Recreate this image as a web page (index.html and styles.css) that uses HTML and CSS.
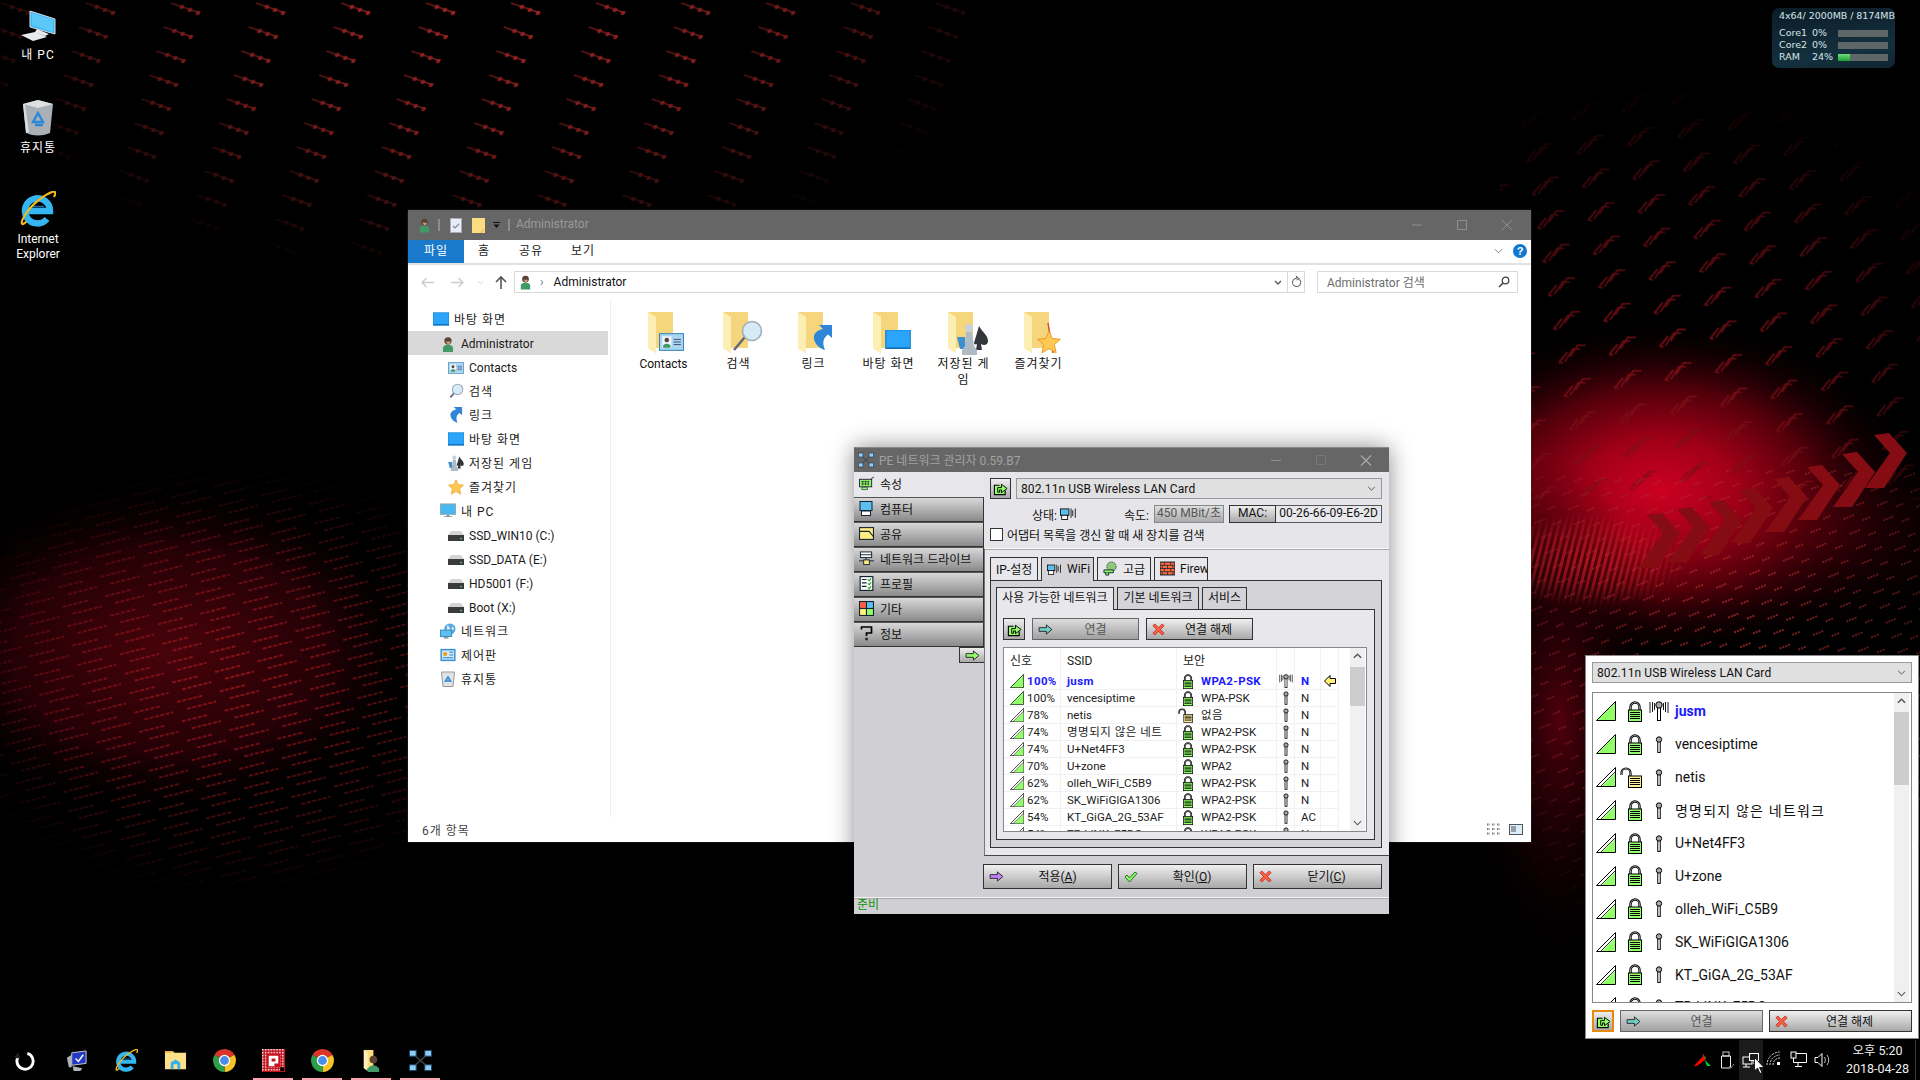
FILE: index.html
```html
<!DOCTYPE html>
<html lang="ko">
<head>
<meta charset="utf-8">
<title>Desktop</title>
<link rel="stylesheet" href="styles.css">
</head>
<body>
<svg class="defs" width="0" height="0">
  <defs>
    <symbol id="sig" viewBox="0 0 20 20"><path d="M.5 19.5 19.5.5v19z" fill="#90ff68" stroke="#000"/></symbol>
    <symbol id="sig2" viewBox="0 0 20 20"><path d="M.5 19.5 19.5.5v19z" fill="#fff" stroke="#000"/><path d="M6 19 19 6v13z" fill="#90ff68"/><path d="M4.5 19.5 19.5 4.5" stroke="#000" stroke-width=".8"/></symbol>
    <symbol id="lock" viewBox="0 0 14 21"><path d="M2.5 9.5V6a4.5 4.5 0 0 1 9 0v3.5" fill="none" stroke="#000" stroke-width="2.4"/><path d="M2.5 9.5V6a4.5 4.5 0 0 1 9 0v3.5" fill="none" stroke="#aaa" stroke-width=".8"/><rect x=".5" y="9" width="13" height="11.5" fill="#90ff68" stroke="#000"/><path d="M2 11.5h10M2 13.5h10M2 15.5h10M2 17.5h10" stroke="#000"/></symbol>
    <symbol id="lockopen" viewBox="0 0 22 21"><path d="M1.5 8V6a4.5 4.5 0 0 1 9 0v4" fill="none" stroke="#000" stroke-width="2.2"/><path d="M1.5 8V6a4.5 4.5 0 0 1 9 0v4" fill="none" stroke="#aaa" stroke-width=".7"/><rect x="8.5" y="9" width="13" height="11.5" fill="#fff098" stroke="#000"/><path d="M10 11.5h10M10 13.5h10M10 15.5h10M10 17.5h10" stroke="#000"/></symbol>
    <symbol id="ant" viewBox="0 0 12 20"><rect x="4.500" y="6" width="3" height="13.5" fill="#fff" stroke="#000" stroke-width="1.200"/><circle cx="6" cy="4" r="3.200" fill="#aaa" stroke="#000" stroke-width="1.200"/></symbol>
    <symbol id="antw" viewBox="0 0 20 20"><rect x="8.500" y="6" width="3" height="13.5" fill="#fff" stroke="#000"/><circle cx="10" cy="4" r="3.2" fill="#aaa" stroke="#000"/><path d="M3.5 1v10M5.5 2v7M16.5 1v10M14.5 2v7M1 1v11M19 1v11" stroke="#000" stroke-width=".9"/></symbol>
    <symbol id="refresh" viewBox="0 0 16 16"><path d="M1.5 5h11v9.500h-11z" fill="#90ff68"/><path d="M7 4.500H1.500v10H13V10" fill="none" stroke="#000" stroke-width="1.200"/><path d="M5 12V7h4V3.500l6 4.500-6 4.500V9.500H7V12z" fill="#90ff68" stroke="#000"/></symbol>
    <symbol id="arrow" viewBox="0 0 16 12"><path d="M1 4h8V1l6 5-6 5V8H1z" fill="currentColor" stroke="#222"/></symbol>
    <symbol id="xmark" viewBox="0 0 14 14"><path d="M1 3 3 1l4 4 4-4 2 2-4 4 4 4-2 2-4-4-4 4-2-2 4-4z" fill="#ff6040" stroke="#b02010" stroke-width=".8"/></symbol>
    <symbol id="check" viewBox="0 0 14 12"><path d="M1 6l2-2 2.5 3L11 1l2 1.5L5.500 11z" fill="#90ff68" stroke="#207020"/></symbol>
    <symbol id="chev" viewBox="0 0 10 6"><path d="M1 5l4-4 4 4" fill="none" stroke="#555" stroke-width="1.6"/></symbol>
    <symbol id="chevd" viewBox="0 0 10 6"><path d="M1 1l4 4 4-4" fill="none" stroke="#555" stroke-width="1.2"/></symbol>
    <symbol id="person" viewBox="0 0 16 16"><path d="M3 16v-4q0-3 5-3.500q5 .5 5 3.500v4z" fill="#3f9a68"/><circle cx="8" cy="4.800" r="3.600" fill="#5b4232"/><path d="M6 5.500h4.500q0 2.500-2 2.800-2-.3-2.500-2.800z" fill="#c99f80"/></symbol>
    <symbol id="fld" viewBox="0 0 26 41"><path d="M0 0h25v36H8v5L0 36z" fill="#f6d67c"/><path d="M0 0l8 5v36l-8-5z" fill="#fdeeb4"/></symbol>
    <symbol id="desk" viewBox="0 0 18 14"><rect width="18" height="14" fill="#1e9bf5"/><rect width="18" height="12.500" fill="#2aa5fb"/><path d="M0 13h18v1H0z" fill="#0a5f9e"/><path d="M0 0h18v14H0z" fill="none" stroke="#1580cc" stroke-width=".8"/></symbol>
    <symbol id="card" viewBox="0 0 24 17"><rect x=".5" y=".5" width="23" height="16" fill="#a9d6f3" stroke="#3b84b8"/><rect x="3" y="3" width="9" height="11" fill="#eaf5fc"/><circle cx="7.500" cy="6.500" r="2.200" fill="#5b4232"/><path d="M4 14v-2.500q3.500-2.500 7 0V14z" fill="#3f9a68"/><path d="M14 6h7M14 8.500h7M14 11h7" stroke="#446" stroke-width=".9"/></symbol>
    <symbol id="mag" viewBox="0 0 20 20"><path d="M3 18l6-7" stroke="#667" stroke-width="2.200"/><circle cx="12" cy="8" r="6.500" fill="#d6eaf8" stroke="#9ab" stroke-width="1.300"/></symbol>
    <symbol id="link" viewBox="0 0 19 25"><path d="M19 0v13l-4-3.500C10 13 9 18 12 25 6 23 2 19 1 14 0 10 3 5 10 4L6 0z" fill="#2f86d8"/></symbol>
    <symbol id="game" viewBox="0 0 31 32"><path d="M0 14h8v6l5 6H3z" fill="#3e8fd0"/><path d="M22 3c3 6 9 9 9 15 0 4-4 5-7 3l1 6h-6l1-6c-2 1-3 0-3-1z" fill="#33363a"/><circle cx="12" cy="5" r="4" fill="#c8d2da"/><path d="M9 9h6l2 14 3 4v5H5v-5l3-4z" fill="#aebac4"/></symbol>
    <symbol id="star" viewBox="0 0 20 20"><path d="M10 1l2.700 6 6.800.7-5 4.500 1.400 6.800-5.900-3.400L4.100 19l1.400-6.800-5-4.500 6.800-.7z" fill="#ffc850" stroke="#e69a28" stroke-width=".8"/></symbol>
    <symbol id="pc" viewBox="0 0 17 16"><rect x=".5" y=".5" width="16" height="11" fill="#4ab8f2" stroke="#8aa"/><path d="M7 12h3v1.500h3v1H4v-1h3z" fill="#8a9aa8"/></symbol>
    <symbol id="drive" viewBox="0 0 16 10"><path d="M3 0h10l3 4H0z" fill="#d4d4d4"/><rect y="4" width="16" height="6" fill="#3a3a3a"/><rect x="12" y="7" width="2" height="1.200" fill="#3fd060"/></symbol>
    <symbol id="netw" viewBox="0 0 17 16"><circle cx="10.500" cy="6" r="6" fill="#5aa8e8"/><path d="M8 1l3 5-4 2zM13 3l2 3-3 2z" fill="#e8eef4"/><rect x=".5" y="7" width="12" height="7" fill="#5cc0ee" stroke="#2a78a8" stroke-width=".8"/><rect x="4" y="14.500" width="5" height="1.500" fill="#889"/></symbol>
    <symbol id="cpl" viewBox="0 0 17 14"><rect x=".5" y=".5" width="16" height="13" fill="#2f8fd0"/><rect x="2" y="2" width="13" height="10" fill="#cfe9f9"/><circle cx="5.500" cy="6" r="2.300" fill="#e8a020"/><path d="M10 4h4M10 7h4M3 10h11" stroke="#2a78b8"/></symbol>
    <symbol id="bin" viewBox="0 0 14 16"><path d="M.5 1h13L12 15.500H2z" fill="#dfe3e6" stroke="#999"/><path d="M7 6l2.500 4h-5z" fill="none" stroke="#2a88d8" stroke-width="1.600"/></symbol>
    <symbol id="chrome" viewBox="0 0 22 22"><path d="M11 11 1.500 5.500a11 11 0 0 1 19 0z" fill="#d9352b"/><path d="M11 11l9.500-5.500A11 11 0 0 1 11 22z" fill="#f7c325"/><path d="M11 11v11A11 11 0 0 1 1.500 5.500z" fill="#2f9e48"/><circle cx="11" cy="11" r="5.400" fill="#fff"/><circle cx="11" cy="11" r="4.200" fill="#4a8de8"/></symbol>
    <symbol id="ie" viewBox="0 0 36 36"><path d="M6 20h24A12.500 12.500 0 1 0 27 28" fill="none" stroke="#35b6f0" stroke-width="6.500"/><path d="M12 15.500h12" stroke="#0d6fb0" stroke-width="1.500"/><path d="M6.500 30.500C1 36 0 32 5 24 11 14 24 4 32 1c4-1 4 1 2 5" fill="none" stroke="#f2b81c" stroke-width="2.200"/></symbol>
    <symbol id="penet" viewBox="0 0 24 22"><path d="M4 4l16 14M20 4 4 18" stroke="#444" stroke-width="1.400"/><g fill="#8ecdf5" stroke="#246"><rect x=".5" y=".5" width="7" height="6"/><rect x="16.500" y=".5" width="7" height="6"/><rect x=".5" y="15.500" width="7" height="6"/><rect x="16.500" y="15.500" width="7" height="6"/></g></symbol>
    <symbol id="wifi" viewBox="0 0 20 15"><rect x=".5" y="1.500" width="10" height="7.500" fill="#5cc0ee" stroke="#000"/><rect x="2" y="9" width="7" height="5" fill="#fff" stroke="#000"/><path d="M13 1v11M15 3v7M18 1v11" stroke="#000"/></symbol>
    <symbol id="nic" viewBox="0 0 16 14"><rect x=".5" y="2.500" width="13" height="8" fill="#90ff68" stroke="#223"/><path d="M13 2l3-2" stroke="#223"/><path d="M2 5h9M2 7.500h9M4 4v5M7 4v5M10 4v5" stroke="#223" stroke-width=".7"/><path d="M3 11h6v2.500H3z" fill="#90ff68" stroke="#223" stroke-width=".7"/></symbol>
    <symbol id="comp" viewBox="0 0 14 15"><rect x=".5" y=".5" width="12" height="9" fill="#5cc0ee" stroke="#123"/><rect x="2" y="10" width="9" height="4.500" fill="#fff" stroke="#123"/></symbol>
    <symbol id="share" viewBox="0 0 14 12"><rect x=".5" y=".5" width="13" height="11" fill="#ffee80" stroke="#123"/><path d="M.5 4h9l4 5" fill="none" stroke="#123"/></symbol>
    <symbol id="drv" viewBox="0 0 16 15"><path d="M7.500 5v5M0 10h16" stroke="#123"/><rect x="5" y="9" width="6" height="5" fill="#ffee80" stroke="#123"/><rect x="1.500" y=".5" width="12" height="6" fill="#fff" stroke="#123"/><path d="M1 3.500h13" stroke="#123"/></symbol>
    <symbol id="prof" viewBox="0 0 12 13"><rect x=".5" y=".5" width="11" height="12" fill="#fff" stroke="#123"/><path d="M2 3h4M2 6h4M2 9h4" stroke="#123"/><path d="M7 3l1.500 1L10 2M7 6.500l1.500 1L10 5.500M7 10l1.500 1L10 9" fill="none" stroke="#2a2"/></symbol>
    <symbol id="misc" viewBox="0 0 14 14"><rect x=".5" y=".5" width="6.500" height="6.500" fill="#ff6040" stroke="#123"/><rect x="7" y=".5" width="6.500" height="6.500" fill="#5cc0ee" stroke="#123"/><rect x=".5" y="7" width="6.500" height="6.500" fill="#ffee80" stroke="#123"/><rect x="7" y="7" width="6.500" height="6.500" fill="#90ff68" stroke="#123"/></symbol>
    <symbol id="help" viewBox="0 0 12 15"><path d="M1 3.500V1h10v6H6v3" fill="none" stroke="#000" stroke-width="1.700"/><rect x="4.800" y="11.800" width="2.500" height="2.500" fill="#223"/></symbol>
    <symbol id="wall" viewBox="0 0 14 12"><rect width="14" height="12" fill="#ff6a3c" stroke="#123"/><path d="M0 3h14M0 6h14M0 9h14M4 0v3M10 0v3M2 3v3M7 3v3M12 3v3M4 6v3M10 6v3M2 9v3M7 9v3M12 9v3" stroke="#123" stroke-width=".7"/></symbol>
    <symbol id="adv" viewBox="0 0 16 15"><circle cx="9" cy="5.500" r="5" fill="#90c878" stroke="#123" stroke-dasharray="1 1"/><path d="M1 9h10v3H1z" fill="#90ff68" stroke="#123"/><path d="M3 12v2.500h3V12" fill="#90ff68" stroke="#123"/></symbol>
    <pattern id="pdot" width="3" height="3" patternUnits="userSpaceOnUse"><rect width="3" height="3" fill="#c3121c"/><rect width="1.500" height="1.500" fill="#fff"/></pattern>
  </defs>
</svg>

<main class="desktop">
  <svg class="wallpaper" viewBox="0 0 1920 1080" preserveAspectRatio="none" aria-hidden="true">
    <defs>
      <pattern id="ps" width="85" height="24" patternUnits="userSpaceOnUse" patternTransform="skewX(-17)">
        <g fill="#a82626"><path d="M2 3l32 10" stroke="#a82626" stroke-width="1.200"/><circle cx="14" cy="7" r="2.200"/><circle cx="23" cy="10" r="2.200"/><circle cx="32" cy="13" r="2.200"/></g>
      </pattern>
      <pattern id="pa" width="51" height="34" patternUnits="userSpaceOnUse" patternTransform="rotate(-9)">
        <g fill="none" stroke="#7a0e16" stroke-width="1.700"><path d="M4 24l10-9M4 24l4 1"/><path d="M10 24l10-11 7 1"/><path d="M16 20l9-10 8 1"/></g>
      </pattern>
      <pattern id="pl" width="44" height="20" patternUnits="userSpaceOnUse" patternTransform="rotate(-14)">
        <path d="M2 4h26M10 13h30" stroke="#a81a20" stroke-width="1.500" stroke-dasharray="4 1.500"/>
      </pattern>
      <pattern id="pr" width="36" height="16" patternUnits="userSpaceOnUse" patternTransform="rotate(-22)">
        <path d="M3 4h12M20 12h9" stroke="#b83030" stroke-width="1.300" stroke-dasharray="2 1"/>
      </pattern>
      <pattern id="pb" width="6" height="30" patternUnits="userSpaceOnUse" patternTransform="rotate(14)">
        <path d="M1.500 0v30" stroke="#d8202a" stroke-width="3"/>
      </pattern>
      <radialGradient id="mtop" gradientUnits="userSpaceOnUse" cx="0" cy="0" r="1" gradientTransform="translate(470 -30) scale(560 310)"><stop offset="0" stop-color="#fff"/><stop offset=".55" stop-color="#bbb"/><stop offset="1" stop-color="#000"/></radialGradient>
      <mask id="mt"><rect width="1920" height="1080" fill="url(#mtop)"/></mask>
      <radialGradient id="marr" gradientUnits="userSpaceOnUse" cx="0" cy="0" r="1" gradientTransform="translate(1660 380) scale(340 300)"><stop offset="0" stop-color="#fff"/><stop offset=".6" stop-color="#999"/><stop offset="1" stop-color="#000"/></radialGradient>
      <mask id="ma"><rect width="1920" height="1080" fill="url(#marr)"/></mask>
      <radialGradient id="mleft" gradientUnits="userSpaceOnUse" cx="0" cy="0" r="1" gradientTransform="translate(230 680) scale(300 220)"><stop offset="0" stop-color="#fff"/><stop offset=".6" stop-color="#888"/><stop offset="1" stop-color="#000"/></radialGradient>
      <mask id="ml"><rect width="1920" height="1080" fill="url(#mleft)"/></mask>
      <radialGradient id="mright" gradientUnits="userSpaceOnUse" cx="0" cy="0" r="1" gradientTransform="translate(1740 640) scale(300 340)"><stop offset="0" stop-color="#fff"/><stop offset=".7" stop-color="#777"/><stop offset="1" stop-color="#000"/></radialGradient>
      <mask id="mr"><rect width="1920" height="1080" fill="url(#mright)"/></mask>
      <radialGradient id="mband" gradientUnits="userSpaceOnUse" cx="0" cy="0" r="1" gradientTransform="translate(1590 560) scale(100 48)"><stop offset="0" stop-color="#aaa"/><stop offset=".6" stop-color="#666"/><stop offset="1" stop-color="#000"/></radialGradient>
      <mask id="mb"><rect width="1920" height="1080" fill="url(#mband)"/></mask>
      <radialGradient id="glow" gradientUnits="userSpaceOnUse" cx="0" cy="0" r="1" gradientTransform="translate(1660 490) scale(250 165)"><stop offset="0" stop-color="#cc0022"/><stop offset=".3" stop-color="#a20018"/><stop offset=".62" stop-color="#50000a"/><stop offset="1" stop-color="#100002" stop-opacity="0"/></radialGradient>
      <radialGradient id="glow2" gradientUnits="userSpaceOnUse" cx="0" cy="0" r="1" gradientTransform="translate(170 650) scale(260 170)"><stop offset="0" stop-color="#48030a"/><stop offset=".6" stop-color="#240106"/><stop offset="1" stop-color="#000" stop-opacity="0"/></radialGradient>
      <radialGradient id="glow3" gradientUnits="userSpaceOnUse" cx="0" cy="0" r="1" gradientTransform="translate(1560 720) scale(100 260)"><stop offset="0" stop-color="#50000c"/><stop offset="1" stop-color="#000" stop-opacity="0"/></radialGradient>
      <radialGradient id="glow4" gradientUnits="userSpaceOnUse" cx="0" cy="0" r="1" gradientTransform="translate(1810 530) scale(190 110)"><stop offset="0" stop-color="#44000a"/><stop offset="1" stop-color="#000" stop-opacity="0"/></radialGradient>
      <path id="chv" d="M-33-18-18-20 0 0-23 35H-42L-17 0z" fill="#860c14"/>
    </defs>
    <rect width="1920" height="1080" fill="#000"/>
    <rect width="1920" height="1080" fill="url(#glow4)"/>
    <rect width="1920" height="1080" fill="url(#glow)"/>
    <rect width="1920" height="1080" fill="url(#glow2)"/>
    <rect width="1920" height="1080" fill="url(#glow3)"/>
    <rect width="1920" height="300" fill="url(#ps)" mask="url(#mt)"/>
    <rect x="1500" y="60" width="420" height="440" fill="url(#pa)" mask="url(#ma)"/>
    <rect y="440" width="420" height="500" fill="url(#pl)" mask="url(#ml)"/>
    <rect x="1530" y="470" width="390" height="520" fill="url(#pr)" mask="url(#mr)"/>
    <rect x="1490" y="510" width="200" height="100" fill="url(#pb)" mask="url(#mb)"/>
    <use href="#chv" x="1680" y="533"/><use href="#chv" x="1710" y="527"/><use href="#chv" x="1742" y="520"/><use href="#chv" x="1773" y="508"/><use href="#chv" x="1807" y="497"/><use href="#chv" x="1840" y="485"/><use href="#chv" x="1875" y="472"/><use href="#chv" x="1907" y="453"/>
  </svg>

  <div class="desk-icon di-pc">
    <svg class="ico-36" viewBox="0 0 36 34"><path d="M10 1 35 9v15L10 17z" fill="#3db6f5" stroke="#d8dee4"/><path d="M12 3l21 7v12L12 15z" fill="#5cc8fa"/><path d="M17 19l12 5-4 2-10-4zM1 25l14-3 12 5-14 4z" fill="#e6eaec"/></svg>
    <span class="ko">내 PC</span>
  </div>
  <div class="desk-icon di-bin">
    <svg class="ico-36" viewBox="0 0 36 36"><path d="M3 4 18 0l15 4-3 29q-12 5-24 0z" fill="#aab0b5"/><path d="M3 4 18 8l15-4-15-4z" fill="#dde1e4"/><path d="M3 4h2l4 28-3 1z" fill="#d8dcdf"/><path d="M18 13l5 9h-10zM15 25h8" fill="none" stroke="#2a88d8" stroke-width="2.400"/></svg>
    <span class="ko">휴지통</span>
  </div>
  <div class="desk-icon di-ie">
    <svg class="ico-36"><use href="#ie"/></svg>
    <span>Internet<br>Explorer</span>
  </div>

  <section class="monitor">
    <div class="mon-head">4x64/ 2000MB / 8174MB</div>
    <div class="mon-row"><span class="mon-l">Core1</span><span class="mon-p">0%</span><span class="mon-bar"></span></div>
    <div class="mon-row"><span class="mon-l">Core2</span><span class="mon-p">0%</span><span class="mon-bar"></span></div>
    <div class="mon-row"><span class="mon-l">RAM</span><span class="mon-p">24%</span><span class="mon-bar"><i class="mon-fill"></i></span></div>
  </section>

  <section class="explorer">
    <header class="ex-title">
      <svg class="i15"><use href="#person"/></svg><i class="bar"></i>
      <svg class="ex-note" viewBox="0 0 12 15"><rect x=".5" y=".5" width="11" height="14" fill="#e6edf4" stroke="#aab"/><path d="M3 8l2 2 4-4" fill="none" stroke="#889" stroke-width="1.200"/></svg>
      <svg class="ex-fold" viewBox="0 0 13 15"><path d="M0 0h13v15H0z" fill="#fbdc80"/><path d="M12 11l-3 4" stroke="#e0b050"/></svg>
      <svg class="ex-dd" viewBox="0 0 7 7"><path d="M0 0h7v1H0zM.5 2.500h6L3.500 6z" fill="#111"/></svg>
      <i class="bar"></i>
      <span class="ex-cap">Administrator</span>
      <span class="wc">
        <svg viewBox="0 0 44 30"><path d="M17 15h10" stroke="#8f8f8f"/></svg>
        <svg viewBox="0 0 44 30"><path d="M17.500 10.500h9v9h-9z" fill="none" stroke="#8f8f8f"/></svg>
        <svg viewBox="0 0 44 30"><path d="M17 10l10 10M27 10 17 20" stroke="#8f8f8f"/></svg>
      </span>
    </header>
    <nav class="ex-ribbon">
      <span class="rt rt-file ko">파일</span><span class="rt rt-home ko">홈</span><span class="rt rt-share ko">공유</span><span class="rt rt-view ko">보기</span>
      <svg class="rb-chev" viewBox="0 0 10 6"><path d="M1 1l4 4 4-4" fill="none" stroke="#777"/></svg>
      <span class="rb-help">?</span>
    </nav>
    <div class="ex-tool">
      <svg class="nav-a" viewBox="0 0 14 12"><path d="M6 1 1 6l5 5M1 6h13" fill="none" stroke="#ccc" stroke-width="1.500"/></svg>
      <svg class="nav-a" viewBox="0 0 14 12"><path d="M8 1l5 5-5 5M13 6H0" fill="none" stroke="#ccc" stroke-width="1.500"/></svg>
      <svg class="nav-c" viewBox="0 0 8 5"><path d="M1 1l3 3 3-3" fill="none" stroke="#ccc"/></svg>
      <svg class="nav-u" viewBox="0 0 12 13"><path d="M1 6l5-5 5 5M6 1v12" fill="none" stroke="#555" stroke-width="1.600"/></svg>
      <div class="addr">
        <svg class="i15"><use href="#person"/></svg>
        <span class="ad-sep">›</span><span class="ad-text">Administrator</span>
        <svg class="ad-dd" viewBox="0 0 8 5"><path d="M1 1l3 3 3-3" fill="none" stroke="#555" stroke-width="1.300"/></svg>
        <span class="ad-ref"><svg viewBox="0 0 12 14"><path d="M9.500 4.500A4.500 4.500 0 1 1 6 3V1l3 2.500L6 5" fill="none" stroke="#666" stroke-width="1.100"/></svg></span>
      </div>
      <div class="srch"><span>Administrator 검색</span><svg viewBox="0 0 12 12"><circle cx="7.500" cy="4.500" r="3.300" fill="none" stroke="#444" stroke-width="1.300"/><path d="M5 7l-4 4" stroke="#444" stroke-width="1.600"/></svg></div>
    </div>
    <div class="ex-body">
      <div class="tree">
        <div class="tr l0 ko"><svg class="t16"><use href="#desk"/></svg>바탕 화면</div>
        <div class="tr l1 sel"><svg class="t16"><use href="#person"/></svg>Administrator</div>
        <div class="tr l2"><svg class="t16"><use href="#card"/></svg>Contacts</div>
        <div class="tr l2 ko"><svg class="t16"><use href="#mag"/></svg>검색</div>
        <div class="tr l2 ko"><svg class="t16"><use href="#link"/></svg>링크</div>
        <div class="tr l2 ko"><svg class="t16"><use href="#desk"/></svg>바탕 화면</div>
        <div class="tr l2 ko"><svg class="t16"><use href="#game"/></svg>저장된 게임</div>
        <div class="tr l2 ko"><svg class="t16"><use href="#star"/></svg>즐겨찾기</div>
        <div class="tr l1 ko"><svg class="t16"><use href="#pc"/></svg>내 PC</div>
        <div class="tr l2"><svg class="t16"><use href="#drive"/></svg>SSD_WIN10 (C:)</div>
        <div class="tr l2"><svg class="t16"><use href="#drive"/></svg>SSD_DATA (E:)</div>
        <div class="tr l2"><svg class="t16"><use href="#drive"/></svg>HD5001 (F:)</div>
        <div class="tr l2"><svg class="t16"><use href="#drive"/></svg>Boot (X:)</div>
        <div class="tr l1 ko"><svg class="t16"><use href="#netw"/></svg>네트워크</div>
        <div class="tr l1 ko"><svg class="t16"><use href="#cpl"/></svg>제어판</div>
        <div class="tr l1 ko"><svg class="t16"><use href="#bin"/></svg>휴지통</div>
      </div>
      <div class="files">
        <figure class="fi"><svg viewBox="0 0 48 44"><use href="#fld" x="8" width="26" height="41"/><use href="#card" x="19" y="21" width="25" height="18"/></svg><figcaption>Contacts</figcaption></figure>
        <figure class="fi"><svg viewBox="0 0 48 44"><use href="#fld" x="8" width="26" height="41"/><path d="M19 38l11-13" stroke="#667" stroke-width="2.500"/><circle cx="37" cy="19" r="9.500" fill="#d6eaf8" stroke="#a0aeb8" stroke-width="1.600"/></svg><figcaption class="ko">검색</figcaption></figure>
        <figure class="fi"><svg viewBox="0 0 48 44"><use href="#fld" x="8" width="26" height="41"/><use href="#link" x="23" y="13" width="19" height="25"/></svg><figcaption class="ko">링크</figcaption></figure>
        <figure class="fi"><svg viewBox="0 0 48 44"><use href="#fld" x="8" width="26" height="41"/><use href="#desk" x="19" y="18" width="28" height="19"/></svg><figcaption class="ko">바탕 화면</figcaption></figure>
        <figure class="fi"><svg viewBox="0 0 48 44"><use href="#fld" x="8" width="26" height="41"/><use href="#game" x="17" y="11" width="31" height="32"/></svg><figcaption class="ko">저장된 게임</figcaption></figure>
        <figure class="fi"><svg viewBox="0 0 48 44"><use href="#fld" x="9" width="26" height="41"/><path d="M33 11l5 30" stroke="#d84a20" stroke-width="1.500"/><use href="#star" x="22" y="18" width="24" height="24"/></svg><figcaption class="ko">즐겨찾기</figcaption></figure>
      </div>
    </div>
    <footer class="ex-status">
      <span class="ko">6개 항목</span>
      <svg class="vw" viewBox="0 0 14 11"><path d="M0 .5h3M5 .5h3M10 .5h3M0 5h3M5 5h3M10 5h3M0 9.500h3M5 9.500h3M10 9.500h3" stroke="#777" stroke-width="2" stroke-dasharray="1 .5"/></svg>
      <svg class="vw vw2" viewBox="0 0 14 11"><rect x=".5" y=".5" width="13" height="10" fill="#d8ecfa" stroke="#555"/><path d="M2 3h5M2 5h5M2 7h5" stroke="#555"/></svg>
    </footer>
  </section>

  <section class="pe">
    <header class="pe-title">
      <svg class="pe-logo"><use href="#penet"/></svg>
      <span class="pe-cap">PE 네트워크 관리자 0.59.B7</span>
      <span class="pe-wc">
        <svg viewBox="0 0 44 25"><path d="M17 12.500h10" stroke="#8f8f8f"/></svg>
        <svg viewBox="0 0 44 25"><path d="M17.500 7.500h9v9h-9z" fill="none" stroke="#777"/></svg>
        <svg viewBox="0 0 44 25"><path d="M17 7.500l10 10M27 7.500l-10 10" stroke="#aaa" stroke-width="1.200"/></svg>
      </span>
    </header>
    <div class="pe-body">
      <aside class="side">
        <div class="sb-i on"><svg class="s15"><use href="#nic"/></svg>속성</div>
        <div class="sb-i"><svg class="s15"><use href="#comp"/></svg>컴퓨터</div>
        <div class="sb-i"><svg class="s15"><use href="#share"/></svg>공유</div>
        <div class="sb-i"><svg class="s15"><use href="#drv"/></svg>네트워크 드라이브</div>
        <div class="sb-i"><svg class="s15"><use href="#prof"/></svg>프로필</div>
        <div class="sb-i"><svg class="s15"><use href="#misc"/></svg>기타</div>
        <div class="sb-i"><svg class="s15"><use href="#help"/></svg>정보</div>
        <button class="sb-go"><svg class="go-a"><use href="#arrow"/></svg></button>
      </aside>
      <div class="pe-main">
        <div class="head">
          <div class="h-row">
            <button class="btn-ref"><svg class="s15"><use href="#refresh"/></svg></button>
            <div class="combo">802.11n USB Wireless LAN Card<svg class="chevd"><use href="#chevd"/></svg></div>
          </div>
          <div class="h-stat">
            <span class="lab-st">상태:</span><svg class="st-i"><use href="#wifi"/></svg>
            <span class="lab-sp">속도:</span><span class="speed">450 MBit/초</span>
            <span class="macb">MAC:</span><span class="macv">00-26-66-09-E6-2D</span>
          </div>
          <label class="h-chk"><i class="cb"></i>어댑터 목록을 갱신 할 때 새 장치를 검색</label>
        </div>
        <div class="tabs-area">
          <div class="tabs">
            <span class="tab t-ip">IP-설정</span>
            <span class="tab t-wi act"><svg class="s15"><use href="#wifi"/></svg>WiFi</span>
            <span class="tab t-ad"><svg class="s15"><use href="#adv"/></svg>고급</span>
            <span class="tab t-fw"><svg class="s15"><use href="#wall"/></svg><span class="fw-t">Firewall</span></span>
          </div>
          <div class="panel">
            <div class="tabs2">
              <span class="tab2 t-av act">사용 가능한 네트워크</span><span class="tab2 t-bs">기본 네트워크</span><span class="tab2 t-sv">서비스</span>
            </div>
            <div class="panel2">
              <div class="act-row">
                <button class="btn-ref r2"><svg class="s15"><use href="#refresh"/></svg></button>
                <button class="pbtn dis w107"><svg class="btn-ar teal"><use href="#arrow"/></svg><span>연결</span></button>
                <button class="pbtn w107"><svg class="btn-x"><use href="#xmark"/></svg><span>연결 해제</span></button>
              </div>
              <div class="list">
                <div class="tbl">
                  <div class="row hdr"><span>신호</span><span>SSID</span><span class="hs">보안</span><span></span><span></span><span></span></div>
                  <div class="row now"><span class="c-s"><svg class="tri"><use href="#sig"/></svg>100%</span><span class="c-n">jusm</span><span class="c-l"><svg class="lk"><use href="#lock"/></svg>WPA2-PSK</span><span class="c-a"><svg class="aw"><use href="#antw"/></svg></span><span class="c-m">N</span><span class="c-p"><svg class="yel" viewBox="0 0 12 12"><path d="M6 .5V3.500h5.500v5H6v3L.5 6z" fill="#fff078" stroke="#000"/></svg></span></div>
                  <div class="row"><span class="c-s"><svg class="tri"><use href="#sig"/></svg>100%</span><span class="c-n">vencesiptime</span><span class="c-l"><svg class="lk"><use href="#lock"/></svg>WPA-PSK</span><span class="c-a"><svg class="an"><use href="#ant"/></svg></span><span class="c-m">N</span><span></span></div>
                  <div class="row"><span class="c-s"><svg class="tri"><use href="#sig2"/></svg>78%</span><span class="c-n">netis</span><span class="c-l"><svg class="lko"><use href="#lockopen"/></svg><span class="ko5">없음</span></span><span class="c-a"><svg class="an"><use href="#ant"/></svg></span><span class="c-m">N</span><span></span></div>
                  <div class="row"><span class="c-s"><svg class="tri"><use href="#sig2"/></svg>74%</span><span class="c-n ko5">명명되지 않은 네트</span><span class="c-l"><svg class="lk"><use href="#lock"/></svg>WPA2-PSK</span><span class="c-a"><svg class="an"><use href="#ant"/></svg></span><span class="c-m">N</span><span></span></div>
                  <div class="row"><span class="c-s"><svg class="tri"><use href="#sig2"/></svg>74%</span><span class="c-n">U+Net4FF3</span><span class="c-l"><svg class="lk"><use href="#lock"/></svg>WPA2-PSK</span><span class="c-a"><svg class="an"><use href="#ant"/></svg></span><span class="c-m">N</span><span></span></div>
                  <div class="row"><span class="c-s"><svg class="tri"><use href="#sig2"/></svg>70%</span><span class="c-n">U+zone</span><span class="c-l"><svg class="lk"><use href="#lock"/></svg>WPA2</span><span class="c-a"><svg class="an"><use href="#ant"/></svg></span><span class="c-m">N</span><span></span></div>
                  <div class="row"><span class="c-s"><svg class="tri"><use href="#sig2"/></svg>62%</span><span class="c-n">olleh_WiFi_C5B9</span><span class="c-l"><svg class="lk"><use href="#lock"/></svg>WPA2-PSK</span><span class="c-a"><svg class="an"><use href="#ant"/></svg></span><span class="c-m">N</span><span></span></div>
                  <div class="row"><span class="c-s"><svg class="tri"><use href="#sig2"/></svg>62%</span><span class="c-n">SK_WiFiGIGA1306</span><span class="c-l"><svg class="lk"><use href="#lock"/></svg>WPA2-PSK</span><span class="c-a"><svg class="an"><use href="#ant"/></svg></span><span class="c-m">N</span><span></span></div>
                  <div class="row"><span class="c-s"><svg class="tri"><use href="#sig2"/></svg>54%</span><span class="c-n">KT_GiGA_2G_53AF</span><span class="c-l"><svg class="lk"><use href="#lock"/></svg>WPA2-PSK</span><span class="c-a"><svg class="an"><use href="#ant"/></svg></span><span class="c-m">AC</span><span></span></div>
                  <div class="row"><span class="c-s"><svg class="tri"><use href="#sig2"/></svg>54%</span><span class="c-n">TP-LINK_F5DC</span><span class="c-l"><svg class="lk"><use href="#lock"/></svg>WPA2-PSK</span><span class="c-a"><svg class="an"><use href="#ant"/></svg></span><span class="c-m">N</span><span></span></div>
                </div>
                <div class="vbar"><svg class="vb-a"><use href="#chev"/></svg><i class="thumb th1"></i><svg class="vb-a vb-d"><use href="#chevd"/></svg></div>
              </div>
            </div>
          </div>
        </div>
        <div class="foot-btns">
          <button class="pbtn w129"><svg class="btn-ar purple"><use href="#arrow"/></svg><span>적용(<u>A</u>)</span></button>
          <button class="pbtn w129"><svg class="btn-ck"><use href="#check"/></svg><span>확인(<u>O</u>)</span></button>
          <button class="pbtn w129"><svg class="btn-x"><use href="#xmark"/></svg><span>닫기(<u>C</u>)</span></button>
        </div>
      </div>
    </div>
    <footer class="pe-status">준비</footer>
  </section>

  <section class="mini">
    <div class="combo m-combo">802.11n USB Wireless LAN Card<svg class="chevd"><use href="#chevd"/></svg></div>
    <div class="m-list">
      <div class="m-rows">
        <div class="m-row now"><svg class="m-tri"><use href="#sig"/></svg><svg class="m-lock"><use href="#lock"/></svg><svg class="m-aw"><use href="#antw"/></svg><span>jusm</span></div>
        <div class="m-row"><svg class="m-tri"><use href="#sig"/></svg><svg class="m-lock"><use href="#lock"/></svg><svg class="m-an"><use href="#ant"/></svg><span>vencesiptime</span></div>
        <div class="m-row"><svg class="m-tri"><use href="#sig2"/></svg><svg class="m-open"><use href="#lockopen"/></svg><svg class="m-an"><use href="#ant"/></svg><span>netis</span></div>
        <div class="m-row"><svg class="m-tri"><use href="#sig2"/></svg><svg class="m-lock"><use href="#lock"/></svg><svg class="m-an"><use href="#ant"/></svg><span class="ko12">명명되지 않은 네트워크</span></div>
        <div class="m-row"><svg class="m-tri"><use href="#sig2"/></svg><svg class="m-lock"><use href="#lock"/></svg><svg class="m-an"><use href="#ant"/></svg><span>U+Net4FF3</span></div>
        <div class="m-row"><svg class="m-tri"><use href="#sig2"/></svg><svg class="m-lock"><use href="#lock"/></svg><svg class="m-an"><use href="#ant"/></svg><span>U+zone</span></div>
        <div class="m-row"><svg class="m-tri"><use href="#sig2"/></svg><svg class="m-lock"><use href="#lock"/></svg><svg class="m-an"><use href="#ant"/></svg><span>olleh_WiFi_C5B9</span></div>
        <div class="m-row"><svg class="m-tri"><use href="#sig2"/></svg><svg class="m-lock"><use href="#lock"/></svg><svg class="m-an"><use href="#ant"/></svg><span>SK_WiFiGIGA1306</span></div>
        <div class="m-row"><svg class="m-tri"><use href="#sig2"/></svg><svg class="m-lock"><use href="#lock"/></svg><svg class="m-an"><use href="#ant"/></svg><span>KT_GiGA_2G_53AF</span></div>
        <div class="m-row"><svg class="m-tri"><use href="#sig2"/></svg><svg class="m-lock"><use href="#lock"/></svg><svg class="m-an"><use href="#ant"/></svg><span>TP-LINK_F5DC</span></div>
      </div>
      <div class="vbar m-bar"><svg class="vb-a"><use href="#chev"/></svg><i class="thumb th2"></i><svg class="vb-a vb-d"><use href="#chevd"/></svg></div>
    </div>
    <div class="m-btns">
      <button class="btn-ref r3"><svg class="s15"><use href="#refresh"/></svg></button>
      <button class="pbtn dis grow"><svg class="btn-ar teal"><use href="#arrow"/></svg><span>연결</span></button>
      <button class="pbtn grow"><svg class="btn-x"><use href="#xmark"/></svg><span>연결 해제</span></button>
    </div>
  </section>

  <footer class="taskbar">
    <div class="tb tb-st"><svg class="t24" viewBox="0 0 24 24"><path d="M16 4.500A8.500 8.500 0 1 1 6.500 8" fill="none" stroke="#fff" stroke-width="3"/><path d="M2 9l5-6 1 7z" fill="#222"/></svg></div>
    <div class="tb tb-2"><svg class="t24" viewBox="0 0 24 24"><path d="M7 4l15-2v13L7 17z" fill="#2438c0" stroke="#c8ccd0"/><path d="M11 10l3 3 5-7" fill="none" stroke="#fff" stroke-width="1.500"/><path d="M2 9l5-3v13H4zM8 18l10 2-2 3H9z" fill="#b0b4b8"/></svg></div>
    <div class="tb tb-3"><svg class="t24"><use href="#ie"/></svg></div>
    <div class="tb"><svg class="t24" viewBox="0 0 24 24"><path d="M1 2h8l2 2h12v17H1z" fill="#fce08a"/><path d="M1 2h8l2 2H1z" fill="#e8b84a"/><path d="M7 21v-7l5-3 5 3v7h-3v-5h-4v5z" fill="#3cb0ee"/></svg></div>
    <div class="tb"><svg class="t24"><use href="#chrome"/></svg></div>
    <div class="tb un"><svg class="t24" viewBox="0 0 24 24"><rect width="24" height="24" fill="url(#pdot)"/><rect x="5" y="5" width="14" height="14" fill="#c3121c"/><path d="M7 7h10v8h-4v3H7z" fill="#fff"/><rect x="10" y="10" width="4" height="3" fill="#c3121c"/><rect x="19" y="19" width="4" height="4" fill="#000"/></svg></div>
    <div class="tb un"><svg class="t24"><use href="#chrome"/></svg></div>
    <div class="tb un"><svg class="t24" viewBox="0 0 24 24"><path d="M4 1h10v19H4z" fill="#fbdc80"/><path d="M4 1l4 3v19l-4-3z" fill="#fff0b8"/><circle cx="14" cy="11" r="4" fill="#5b4232"/><path d="M8 24v-4q6-6 12 0v4z" fill="#3f9a68"/></svg></div>
    <div class="tb un"><svg class="t24"><use href="#penet"/></svg></div>
    <div class="tray">
      <div class="tr-i"><svg class="t18" viewBox="0 0 18 14"><path d="M0 13 9 3l2 4-8 6z" fill="#f00"/><path d="M9 3l3 1-1 3 6 6h-4z" fill="#0c3"/><path d="M9 1l2 6" stroke="#f00"/></svg></div>
      <div class="tr-i"><svg class="t18" viewBox="0 0 18 18"><rect x="5" y="1" width="6" height="4" fill="none" stroke="#ccc"/><path d="M3.500 5h9v12h-9z" fill="none" stroke="#eee"/><path d="M11 15l2 2 3-4" fill="none" stroke="#888"/></svg></div>
      <div class="tr-i tr-on"><svg class="t18" viewBox="0 0 18 18"><rect x="1" y="6" width="9" height="7" fill="none" stroke="#fff"/><rect x="7.500" y="2.500" width="9" height="7" fill="#1a1a1a" stroke="#fff"/><path d="M4 13v3M1 16h7M12 10v3" stroke="#fff"/></svg></div>
      <div class="tr-i"><svg class="t18" viewBox="0 0 18 18"><g fill="none" stroke="#ddd" stroke-dasharray="2 1"><path d="M1 14A13 13 0 0 1 14 1"/><path d="M4 14A10 10 0 0 1 14 4"/><path d="M7 14A7 7 0 0 1 14 7"/></g><rect x="11" y="11" width="3" height="3" fill="#fff"/></svg></div>
      <div class="tr-i"><svg class="t18" viewBox="0 0 18 18"><path d="M3.500 2.500h13v9h-13z" fill="none" stroke="#fff"/><rect x="1" y="1" width="5" height="6" fill="#111" stroke="#fff"/><path d="M8 11.500v4M5 15.500h7" stroke="#fff"/></svg></div>
      <div class="tr-i"><svg class="t18" viewBox="0 0 18 18"><path d="M1 6.500h3l4-4v13l-4-4H1z" fill="none" stroke="#fff"/><path d="M10.500 6q2 3 0 6M13 4q3.500 5 0 10" fill="none" stroke="#bbb"/></svg></div>
      <time class="clock">오후 5:20<br>2018-04-28</time>
      <i class="tr-end"></i>
    </div>
  </footer>
  <svg class="cursor" viewBox="0 0 11 17"><path d="M.5.500v13.500l3-3 2.500 5.500 2-1L5.500 10.500H10z" fill="#fff" stroke="#000" stroke-width=".8"/></svg>
</main>
</body>
</html>
```
FILE: styles.css
```css
* { box-sizing: border-box; }
html, body { margin: 0; padding: 0; width: 1920px; height: 1080px; overflow: hidden; background: #000; }
body, button { font-family: Roboto, "Noto Sans CJK KR", sans-serif; font-size: 12px; }
button { padding: 0; margin: 0; }
svg { display: block; flex: none; overflow: visible; }
figure { margin: 0; }
.defs { position: absolute; }
.desktop { position: relative; width: 1920px; height: 1080px; overflow: hidden; }
.wallpaper { position: absolute; inset: 0; width: 1920px; height: 1080px; }
.ko { letter-spacing: 1px; }
.ko5 { letter-spacing: .5px; }
.ko12 { letter-spacing: 1.2px; }

/* desktop icons */
.desk-icon { position: absolute; left: 0; width: 76px; display: flex; flex-direction: column; align-items: center; color: #fff; text-align: center; line-height: 15px; }
.ico-36 { width: 36px; height: 36px; }
.di-pc { top: 9px; gap: 3px; }
.di-bin { top: 100px; gap: 5px; }
.di-ie { top: 191px; gap: 5px; }

/* monitor widget */
.monitor { position: absolute; left: 1772px; top: 8px; width: 123px; height: 60px; border-radius: 7px; background: linear-gradient(170deg, #0b1c26, #14303e 70%, #0f2430); color: #d6e4e6; font-size: 9.5px; padding: 2px 7px; line-height: 12px; font-family: "DejaVu Sans", sans-serif; }
.mon-head { margin-bottom: 5px; letter-spacing: -.05px; white-space: nowrap; }
.mon-row { display: flex; align-items: center; height: 12px; }
.mon-l { width: 33px; }
.mon-p { width: 26px; }
.mon-bar { width: 50px; height: 7px; background: #5f6668; }
.mon-fill { display: block; width: 12px; height: 7px; background: linear-gradient(#6fe07a, #1da030); }

/* explorer */
.explorer { position: absolute; left: 408px; top: 210px; width: 1123px; height: 632px; background: #fff; display: flex; flex-direction: column; box-shadow: 0 0 2px #333; }
.ex-title { height: 30px; background: #666; display: flex; align-items: center; padding-left: 9px; flex: none; }
.i15 { width: 15px; height: 16px; }
.bar { width: 2px; height: 12px; background: #8c8c8c; margin-left: 6px; }
.ex-note { width: 12px; height: 15px; margin-left: 10px; }
.ex-fold { width: 13px; height: 15px; margin-left: 10px; }
.ex-dd { width: 7px; height: 7px; margin-left: 8px; }
.ex-dd + .bar { margin-left: 8px; }
.ex-cap { color: #9a9a9a; margin-left: 6px; padding-bottom: 2px; }
.wc { margin-left: auto; margin-right: 2px; display: flex; }
.wc svg { width: 44px; height: 30px; margin-left: 1px; }
.ex-ribbon { height: 25px; flex: none; border-bottom: 2px solid #e1e1e1; display: flex; line-height: 23px; position: relative; color: #222; align-items: flex-start; }
.rt { text-align: center; height: 23px; }
.rt-file { width: 56px; background: #1979ca; color: #fff; }
.rt-home { width: 40px; }
.rt-share { width: 54px; }
.rt-view { width: 50px; }
.rb-chev { width: 9px; height: 6px; margin: 8px 0 0 auto; }
.rb-help { width: 14px; height: 14px; border-radius: 50%; background: #0f78d0; color: #fff; font: bold 11px/14px "Liberation Sans", sans-serif; text-align: center; margin: 4px 4px 0 10px; }
.ex-tool { height: 35px; flex: none; display: flex; align-items: flex-start; padding: 6px 13px 0 13px; }
.nav-a { width: 13px; height: 11px; margin: 6px 15px 0 0; }
.nav-a + .nav-a { margin-left: 2px; margin-right: 13px; }
.nav-c { width: 7px; height: 5px; margin: 9px 11px 0 0; }
.nav-u { width: 12px; height: 13px; margin: 5px 7px 0 0; }
.addr { width: 791px; height: 22px; border: 1px solid #d9d9d9; display: flex; align-items: center; padding-left: 3px; color: #111; }
.ad-sep { margin-left: 7px; color: #777; line-height: 18px; }
.ad-text { margin-left: 10px; }
.ad-dd { width: 8px; height: 5px; margin-left: auto; }
.ad-ref { width: 17px; height: 20px; margin-left: 5px; border-left: 1px solid #d9d9d9; display: flex; align-items: center; justify-content: center; }
.ad-ref svg { width: 11px; height: 14px; }
.srch { width: 201px; height: 22px; margin-left: 12px; border: 1px solid #d9d9d9; display: flex; align-items: center; justify-content: space-between; padding: 0 7px 0 9px; color: #6d6d6d; }
.srch span { padding-bottom: 2px; }
.srch svg { width: 12px; height: 12px; }
.ex-body { flex: 1; display: flex; min-height: 0; }
.tree { width: 203px; flex: none; border-right: 1px solid #f0f0f0; padding-top: 7px; color: #1a1a1a; }
.tr { height: 24px; display: flex; align-items: center; gap: 5px; width: 200px; padding-top: 1px; }
.tr.ko { padding-top: 0; padding-bottom: 1px; }
.tr.ko svg { margin-top: 1px; }
.sel { background: #d9d9d9; }
.l0 { padding-left: 25px; }
.l1 { padding-left: 32px; }
.l2 { padding-left: 40px; }
.t16 { width: 16px; height: 16px; }
.files { flex: 1; display: flex; align-items: flex-start; padding: 12px 0 0 15px; }
.fi { width: 75px; display: flex; flex-direction: column; align-items: center; text-align: center; line-height: 16px; color: #111; padding: 0 7px; }
.fi svg { width: 48px; height: 44px; }
.fi figcaption { word-break: break-all; width: 61px; }
.ex-status { height: 25px; flex: none; display: flex; align-items: center; padding: 0 8px 0 14px; color: #444; }
.ex-status span { margin-right: auto; }
.vw { width: 14px; height: 11px; }
.vw2 { margin-left: 8px; }

/* PE window */
.pe { position: absolute; left: 854px; top: 447px; width: 535px; height: 467px; display: flex; flex-direction: column; background: #d0d0d4; box-shadow: 0 0 22px rgba(0,0,0,.45); color: #111; }
.pe-title { height: 25px; flex: none; background: #666; display: flex; align-items: center; padding-left: 4px; border-top: 1px solid #888; }
.pe-logo { width: 16px; height: 16px; }
.pe-cap { color: #a2a2a2; margin-left: 5px; padding-bottom: 2px; }
.pe-wc { margin-left: auto; margin-right: 1px; display: flex; }
.pe-wc svg { width: 44px; height: 25px; margin-left: 1px; }
.pe-body { flex: 1; display: flex; min-height: 0; }
.side { width: 130px; flex: none; }
.sb-i { height: 25px; display: flex; align-items: center; gap: 6px; padding: 0 0 2px 5px; border: 1px solid #333; border-left: 0; border-top-color: #555; background: linear-gradient(#d8d8d8, #8a8a8a); color: #111; }
.sb-i.on { background: #e8e8ec; border: 0; }
.s15 { width: 15px; height: 15px; }
.sb-go { display: block; width: 25px; height: 16px; margin-left: 105px; background: linear-gradient(#eee, #aaa); border: 1px solid #333; border-right: 0; }
.go-a { width: 15px; height: 11px; margin: auto; color: #90ff68; }
.pe-main { flex: 1; display: flex; flex-direction: column; min-width: 0; }
.head { height: 76px; flex: none; padding: 6px 7px 0 6px; background: #e6e6ea; }
.h-row { display: flex; gap: 5px; }
.btn-ref { width: 21px; height: 21px; border: 1px solid #333; background: linear-gradient(#eee, #aaa); display: flex; align-items: center; justify-content: center; flex: none; }
.combo { flex: 1; height: 21px; background: #e0e0e0; border: 1px solid #999; display: flex; align-items: center; justify-content: space-between; padding: 0 5px 0 4px; color: #111; letter-spacing: .1px; }
.chevd { width: 9px; height: 5px; }
.h-stat { display: flex; align-items: center; height: 18px; margin-top: 6px; }
.lab-st { margin-left: 42px; }
.st-i { width: 17px; height: 14px; margin-left: 3px; }
.lab-sp { margin-left: auto; }
.speed { width: 70px; height: 18px; margin-left: 5px; background: linear-gradient(#ddd, #aaa); border: 1px solid #888; color: #555; text-align: center; line-height: 15px; }
.macb { width: 47px; height: 18px; margin-left: 5px; background: linear-gradient(#eee, #aaa); border: 1px solid #333; text-align: center; line-height: 15px; }
.macv { width: 106px; height: 18px; background: #e8e8ec; border: 1px solid #555; border-left: 0; text-align: center; line-height: 15px; }
.h-chk { display: flex; align-items: center; height: 14px; margin-top: 4px; gap: 4px; }
.cb { width: 13px; height: 13px; background: #fff; border: 1px solid #333; margin-top: 1px; }
.tabs-area { height: 308px; flex: none; background: #e8e8ec; border-top: 1px solid #fafafa; border-left: 1px solid #777; border-bottom: 1px solid #444; padding: 8px 7px 7px 5px; display: flex; flex-direction: column; box-shadow: inset 0 1px 0 #aaa; }
.tabs { display: flex; gap: 3px; height: 23px; flex: none; }
.tab { height: 23px; border: 1px solid #333; border-bottom: 0; background: #e8e8ec; display: flex; align-items: center; gap: 5px; padding-left: 5px; overflow: hidden; padding-bottom: 1px; }
.tab.act { background: #d4d4d8; height: 24px; position: relative; z-index: 1; }
.t-ip { width: 48px; }
.t-wi { width: 53px; }
.t-ad { width: 54px; }
.t-fw { width: 54px; }
.fw-t { white-space: nowrap; }
.panel { height: 268px; flex: none; background: #d4d4d8; border: 1px solid #333; padding: 6px 6px 7px 5px; display: flex; flex-direction: column; }
.tabs2 { display: flex; gap: 3px; height: 22px; flex: none; }
.tab2 { height: 22px; border: 1px solid #333; border-bottom: 0; background: #d4d4d8; text-align: center; line-height: 20px; }
.tab2.act { background: #e8e8ec; height: 23px; position: relative; z-index: 1; }
.t-av { width: 118px; }
.t-bs { width: 82px; }
.t-sv { width: 45px; }
.panel2 { flex: 1; background: #e8e8ec; border: 1px solid #333; padding: 8px 7px 7px 6px; display: flex; flex-direction: column; min-height: 0; }
.act-row { display: flex; gap: 7px; height: 22px; flex: none; }
.r2 { width: 22px; height: 22px; }
.pbtn { height: 100%; border: 1px solid #333; background: linear-gradient(#f0f0f0, #a8a8a8); display: flex; align-items: center; padding: 0 0 2px 5px; color: #111; position: relative; }
.pbtn svg { margin-top: 2px; }
.pbtn span { flex: 1; text-align: center; }
.pbtn.dis { border-color: #666; background: linear-gradient(#dedede, #a0a0a0); color: #555; }
.w107 { width: 107px; }
.w129 { width: 129px; }
.grow { flex: 1; }
.btn-ar { width: 15px; height: 11px; }
.teal { color: #6fd0c8; }
.purple { color: #c880ff; }
.btn-x { width: 13px; height: 13px; }
.btn-ck { width: 14px; height: 12px; }
.list { margin-top: 7px; height: 185px; flex: none; background: #fff; border: 1px solid #888; display: flex; padding-right: 1px; overflow: hidden; }
.tbl { flex: 1; min-width: 0; overflow: hidden; }
.row { display: grid; grid-template-columns: 57px 116px 100px 18px 26px 18px 11px; height: 17px; align-items: center; line-height: 16px; white-space: nowrap; font-size: 11.5px; color: #222; }
.row > span { height: 17px; display: flex; align-items: center; border-right: 1px solid #f1f1f1; border-bottom: 1px solid #f1f1f1; overflow: hidden; }
.row.hdr { height: 25px; font-size: 12px; }
.row.hdr > span { height: 25px; padding-left: 6px; color: #222; border-bottom: 0; }
.c-s { padding-left: 6px; gap: 3px; }
.c-n { padding-left: 6px; }
.c-l { padding-left: 6px; gap: 8px; }
.c-a { justify-content: center; }
.c-m { padding-left: 6px; }
.c-p { justify-content: center; }
.tri { width: 14px; height: 14px; }
.lk { width: 10px; height: 15px; }
.lko { width: 15px; height: 15px; margin-left: -5px; }
.an { width: 8px; height: 14px; }
.aw { width: 14px; height: 14px; }
.yel { width: 12px; height: 12px; }
.row.now { color: #1a1aff; font-weight: 700; letter-spacing: .35px; }
.vbar { width: 15px; flex: none; background: #f0f0f0; display: flex; flex-direction: column; align-items: center; padding-top: 5px; position: relative; }
.vb-a { width: 9px; height: 6px; }
.thumb { display: block; width: 100%; background: #cdcdcd; }
.th1 { height: 39px; margin-top: 8px; }
.vb-d { margin-top: auto; margin-bottom: 5px; }
.foot-btns { display: flex; gap: 6px; height: 25px; margin: 8px 0 0 -1px; flex: none; }
.pe-status { height: 17px; flex: none; border-top: 1px solid #f4f4f4; box-shadow: inset 0 1px 0 #aaa; color: #109010; line-height: 14px; padding-left: 3px; }

/* network mini panel */
.mini { position: absolute; left: 1586px; top: 656px; width: 332px; height: 382px; background: #fff; padding: 6px; display: flex; flex-direction: column; box-shadow: 0 0 0 1px #888; color: #111; }
.m-combo { flex: none; }
.m-list { margin-top: 9px; height: 311px; flex: none; border: 1px solid #888; display: flex; padding-right: 2px; overflow: hidden; }
.m-rows { flex: 1; padding: 2px 0 0 3px; overflow: hidden; min-width: 0; }
.m-row { height: 32.9px; display: flex; align-items: center; font-size: 14px; color: #111; white-space: nowrap; }
.m-row.now { color: #1a1aff; font-weight: 700; }
.m-tri { width: 20px; height: 20px; margin-right: 12px; }
.m-lock { width: 14px; height: 21px; margin-right: 12px; }
.m-open { width: 22px; height: 21px; margin: 0 12px 0 -8px; }
.m-an { width: 10px; height: 19px; margin-right: 11px; }
.m-aw { width: 20px; height: 20px; margin: 0 6px 0 -5px; }
.m-bar { padding-top: 5px; }
.th2 { height: 73px; margin-top: 8px; }
.m-btns { margin-top: 7px; height: 22px; flex: none; display: flex; gap: 6px; }
.r3 { width: 22px; height: 22px; border: 2px solid #e88a10; }

/* taskbar */
.taskbar { position: absolute; left: 0; right: 0; bottom: 0; height: 40px; display: flex; color: #fff; }
.tb { width: 49px; height: 40px; flex: none; display: flex; align-items: center; justify-content: center; position: relative; }
.tb-st { width: 46px; }
.tb-2 { margin-left: 5.500px; }
.tb-3 { margin-left: 1px; }
.t24 { width: 23px; height: 23px; }
.tb.un::after { content: ""; position: absolute; left: 4.500px; right: 4.500px; bottom: 0; height: 2px; background: #ffa3b1; }
.tray { margin-left: auto; display: flex; align-items: stretch; }
.tr-i { width: 24px; display: flex; align-items: center; justify-content: center; }
.tr-on { background: #1b1b1b; }
.t18 { width: 18px; height: 18px; }
.clock { width: 80px; text-align: center; line-height: 18px; padding: 2px 0 0 5px; color: #eee; display: block; white-space: nowrap; font-size: 12.5px; }
.tr-end { width: 5px; border-left: 1px solid #3a3a3a; }
.cursor { position: absolute; left: 1754px; top: 1057px; width: 11px; height: 17px; }
```
